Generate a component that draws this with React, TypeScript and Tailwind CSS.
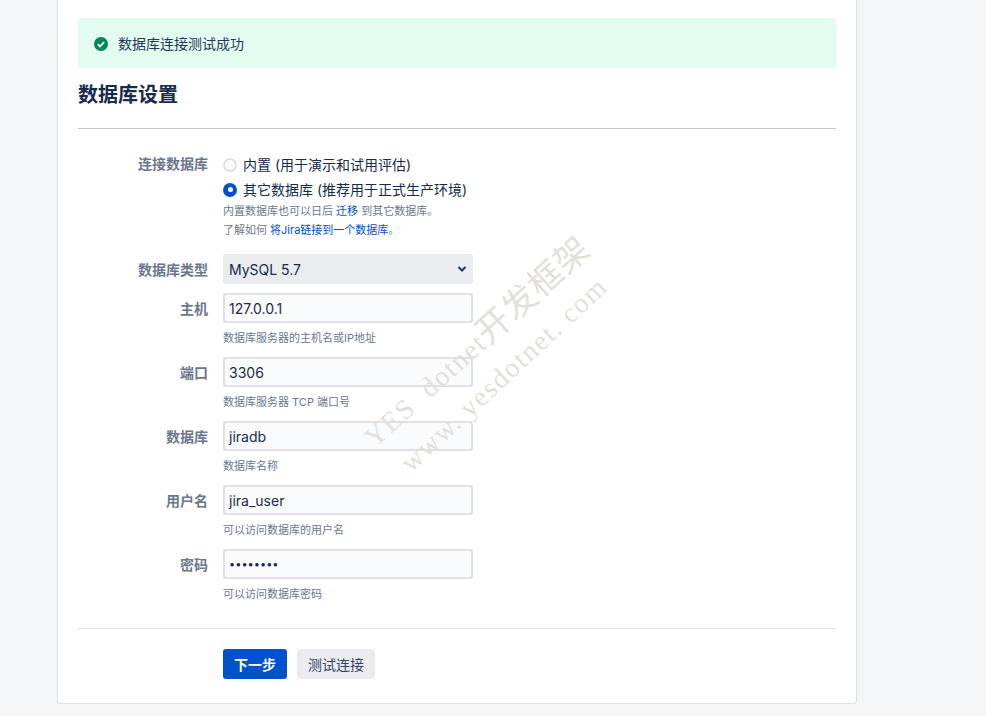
import React from "react";

function Field({ label, value, help, dots }: { label: string; value: string; help: string; dots?: boolean }) {
  return (
    <div className="flex h-[64px]">
      <div className="w-[130px] pt-[6px] text-right text-[14px] leading-[20px] font-semibold text-[#6b778c]">{label}</div>
      <div className="ml-[15px] w-[250px]">
        <div className={`flex h-[30px] items-center rounded-[3px] border-2 border-[#dfe1e6] bg-[#fafbfc] px-[4px] pt-[1px] text-[#172b4d] ${dots ? "text-[11px]" : "text-[14px]"}`}>
          {value}
        </div>
        <div className="mt-[7px] text-[11px] leading-[16px] text-[#6b778c]">{help}</div>
      </div>
    </div>
  );
}

export default function App() {
  return (
    <div className="relative h-[716px] w-[986px] overflow-hidden bg-[#f4f5f7] font-['Inter','Noto_Sans_CJK_SC',sans-serif]">
      <div className="ml-[57px] h-[704px] w-[800px] rounded-b-[3px] border border-t-0 border-[#dfe1e6] bg-white px-[20px] pt-[18px]">
        <div className="flex h-[50px] items-center rounded-[3px] bg-[#e3fcef] pt-[1px] pl-[15px] text-[14px] text-[#253858]">
          <svg width="16" height="16" viewBox="0 0 16 16" className="mr-[9px]">
            <circle cx="8" cy="8" r="7" fill="#00875a" />
            <path d="M4.8 8.2l2.2 2.2 4.2-4.4" fill="none" stroke="#fff" strokeWidth="1.8" />
          </svg>
          数据库连接测试成功
        </div>
        <h2 className="mt-[12px] pt-[1px] text-[20px] leading-[28px] font-semibold text-[#172b4d]">数据库设置</h2>
        <div className="mt-[19px] h-px bg-[#c1c7d0]" />

        <div className="mt-[25px] flex">
          <div className="w-[130px] text-right text-[14px] leading-[20px] font-semibold text-[#6b778c]">连接数据库</div>
          <div className="ml-[15px]">
            <div className="flex h-[20px] items-center text-[14px] text-[#172b4d]">
              <span className="mt-[1px] mr-[6px] h-[14px] w-[14px] rounded-full border-2 border-[#dfe1e6] bg-[#fafbfc]" />
              <span>内置 (用于演示和试用评估)</span>
            </div>
            <div className="mt-[5px] flex h-[20px] items-center text-[14px] text-[#172b4d]">
              <span className="mt-[1px] mr-[6px] flex h-[14px] w-[14px] items-center justify-center rounded-full bg-[#0052cc]">
                <span className="h-[5px] w-[5px] rounded-full bg-white" />
              </span>
              <span>其它数据库 (推荐用于正式生产环境)</span>
            </div>
            <div className="mt-[3px] text-[11px] leading-[19px] text-[#6b778c]">
              内置数据库也可以日后 <span className="text-[#0052cc]">迁移</span> 到其它数据库。
            </div>
            <div className="text-[11px] leading-[19px] text-[#6b778c]">
              了解如何 <span className="text-[#0052cc]">将Jira链接到一个数据库</span>。
            </div>
          </div>
        </div>

        <div className="mt-[14px] flex h-[39px]">
          <div className="w-[130px] pt-[6px] text-right text-[14px] leading-[20px] font-semibold text-[#6b778c]">数据库类型</div>
          <div className="ml-[15px] flex h-[30px] w-[250px] items-center justify-between rounded-[3px] bg-[#ebecf0] pr-[6px] pl-[6px] text-[14px] text-[#172b4d]">
            MySQL 5.7
            <svg width="10" height="8" viewBox="0 0 10 8">
              <path d="M1.500 2l3.500 3.500L8.500 2" fill="none" stroke="#253858" strokeWidth="2" />
            </svg>
          </div>
        </div>

        <Field label="主机" value="127.0.0.1" help="数据库服务器的主机名或IP地址" />
        <Field label="端口" value="3306" help="数据库服务器 TCP 端口号" />
        <Field label="数据库" value="jiradb" help="数据库名称" />
        <Field label="用户名" value="jira_user" help="可以访问数据库的用户名" />
        <Field label="密码" value="••••••••" help="可以访问数据库密码" dots />

        <div className="mt-[15px] h-px bg-[#dfe1e6]" />
        <div className="mt-[20px] ml-[145px] flex gap-[10px]">
          <button className="h-[30px] w-[64px] rounded-[3px] bg-[#0052cc] text-[14px] font-semibold text-white">下一步</button>
          <button className="h-[30px] w-[78px] rounded-[3px] bg-[#ebecf0] text-[14px] text-[#344563]">测试连接</button>
        </div>
      </div>

      <div className="pointer-events-none absolute top-[425px] left-[368px] origin-left rotate-[-42deg] whitespace-pre font-['Liberation_Serif','Noto_Sans_CJK_SC',serif] text-[28px] leading-[30px] tracking-[1.5px] text-[#e3dfda]">
        {"YES  dotnet"}<span className="text-[34px] tracking-[1px]">开发框架</span>
      </div>
      <div className="pointer-events-none absolute top-[452px] left-[405px] origin-left rotate-[-43deg] whitespace-nowrap font-['Liberation_Serif',serif] text-[28px] leading-[30px] tracking-[1.5px] text-[#e3dfda]">
        www. yesdotnet. com
      </div>
    </div>
  );
}
